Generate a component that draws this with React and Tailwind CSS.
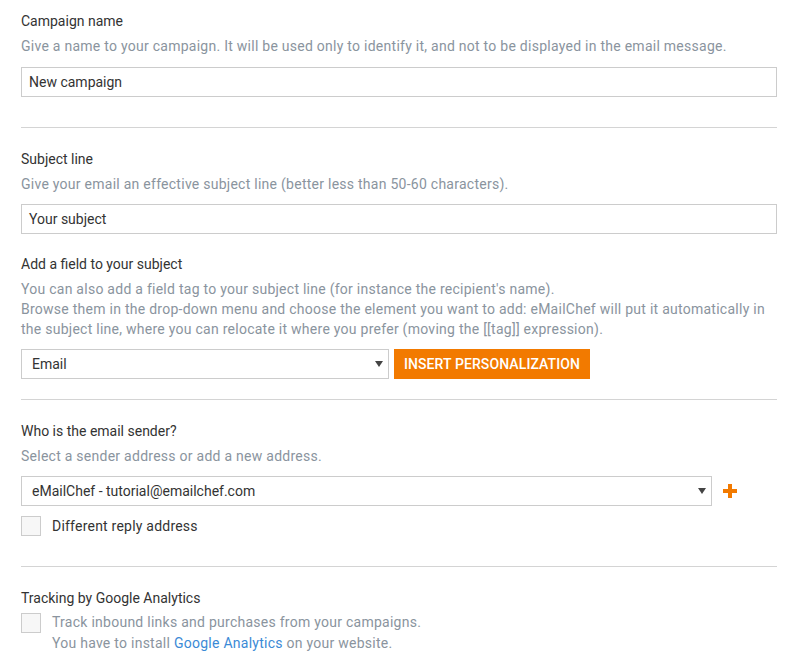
import React from "react";

const Title = ({ children, className = "" }) => (
  <div className={`text-[14px] leading-[20px] text-[#333] ${className}`}>{children}</div>
);
const Desc = ({ children, className = "" }) => (
  <div className={`text-[14px] leading-[20px] tracking-[0.26px] text-[#8a949e] whitespace-nowrap ${className}`}>{children}</div>
);
const Divider = ({ className = "" }) => <div className={`h-px bg-[#d4d4d4] ${className}`} />;

const Caret = () => (
  <svg width="8" height="6" viewBox="0 0 8 6" className="shrink-0">
    <path d="M0 0 L8 0 L4 6 Z" fill="#444" />
  </svg>
);

const Select = ({ value, className = "" }) => (
  <div
    className={`h-[30px] border border-[#ccc] bg-white flex items-center justify-between pl-[10px] pr-[5px] text-[14px] text-[#333] ${className}`}
  >
    <span>{value}</span>
    <Caret />
  </div>
);

const Checkbox = ({ className = "" }) => (
  <div className={`w-[20px] h-[20px] border border-[#ccc] bg-[#f7f7f7] shrink-0 ${className}`} />
);

export default function App() {
  return (
    <div
      className="w-[800px] h-[671px] bg-white overflow-hidden"
      style={{ fontFamily: "Roboto, 'Liberation Sans', sans-serif" }}
    >
      <div className="ml-[21px] w-[756px] pt-[11px]">
        <Title>Campaign name</Title>
        <Desc className="mt-[5px]">
          Give a name to your campaign. It will be used only to identify it, and not to be displayed in the email message.
        </Desc>
        <div className="mt-[11px] h-[30px] border border-[#ccc] flex items-center pl-[7px] text-[14px] text-[#333]">
          New campaign
        </div>

        <Divider className="mt-[30px]" />

        <Title className="mt-[21px]">Subject line</Title>
        <Desc className="mt-[5px]">
          Give your email an effective subject line (better less than 50-60 characters).
        </Desc>
        <div className="mt-[10px] h-[30px] border border-[#ccc] flex items-center pl-[7px] text-[14px] text-[#333]">
          Your subject
        </div>

        <Title className="mt-[20px]">Add a field to your subject</Title>
        <Desc className="mt-[5px]">
          <div>You can also add a field tag to your subject line (for instance the recipient&apos;s name).</div>
          <div>Browse them in the drop-down menu and choose the element you want to add: eMailChef will put it automatically in</div>
          <div>the subject line, where you can relocate it where you prefer (moving the [[tag]] expression).</div>
        </Desc>
        <div className="mt-[10px] flex items-center">
          <Select value="Email" className="w-[368px]" />
          <button className="ml-[5px] h-[30px] w-[196px] bg-[#f27a00] text-white text-[14px] font-medium tracking-[0.1px] flex items-center justify-center">
            INSERT PERSONALIZATION
          </button>
        </div>

        <Divider className="mt-[20px]" />

        <Title className="mt-[21px]">Who is the email sender?</Title>
        <Desc className="mt-[5px]">Select a sender address or add a new address.</Desc>
        <div className="mt-[10px] flex items-center">
          <Select value="eMailChef - tutorial@emailchef.com" className="w-[691px]" />
          <svg width="14" height="14" viewBox="0 0 14 14" className="ml-[11px]">
            <rect x="5" y="0" width="4" height="14" fill="#f27a00" />
            <rect x="0" y="5" width="14" height="4" fill="#f27a00" />
          </svg>
        </div>
        <div className="mt-[10px] flex items-center">
          <Checkbox />
          <span className="ml-[11px] text-[14px] leading-[20px] tracking-[0.22px] text-[#333]">Different reply address</span>
        </div>

        <Divider className="mt-[30px]" />

        <Title className="mt-[21px]">Tracking by Google Analytics</Title>
        <div className="mt-[4px] flex items-start">
          <Checkbox className="mt-[1px]" />
          <div className="ml-[11px] text-[14px] leading-[21px] tracking-[0.26px] text-[#8a949e]">
            Track inbound links and purchases from your campaigns.
            <br />
            You have to install <span className="text-[#3b8ad6]">Google Analytics</span> on your website.
          </div>
        </div>
      </div>
    </div>
  );
}
